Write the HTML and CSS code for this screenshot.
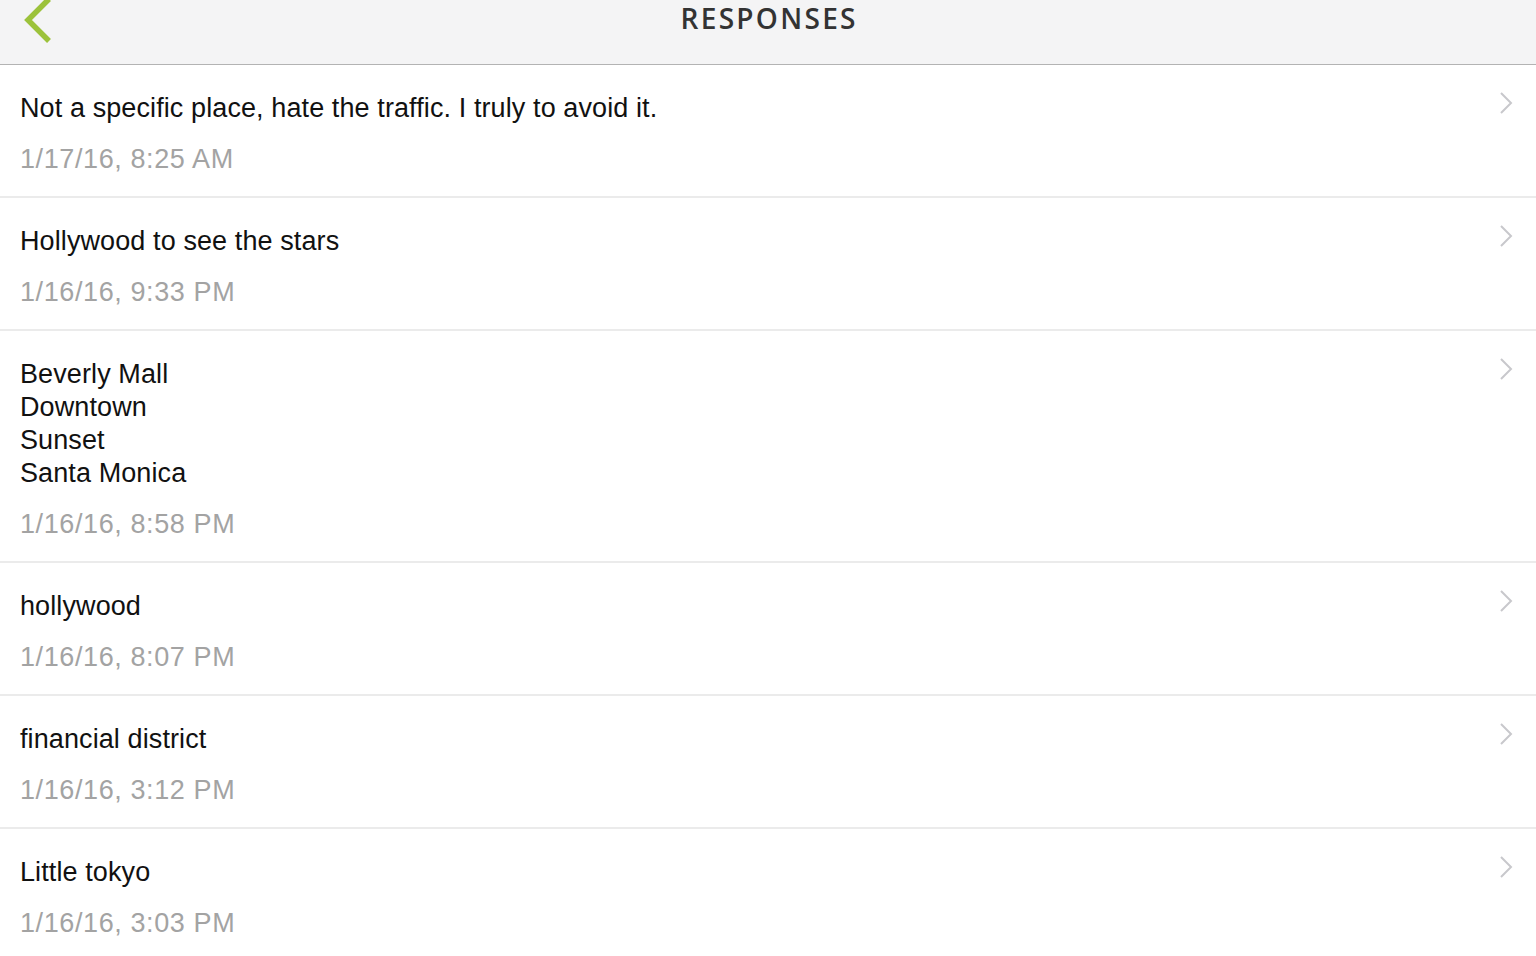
FILE: index.html
```html
<!DOCTYPE html>
<html lang="en">
<head>
<meta charset="utf-8">
<title>Responses</title>
<link rel="stylesheet" href="styles.css">
</head>
<body>
<header class="topbar">
  <div class="topbar-left">
    <svg class="back" width="32" height="44" viewBox="0 0 32 44" aria-hidden="true">
      <path d="M28 -1 L7 20 L28 41" fill="none" stroke="#9cc23b" stroke-width="5.5" stroke-linecap="butt" stroke-linejoin="miter"/>
    </svg>
  </div>
  <h1 class="title">RESPONSES</h1>
  <div class="topbar-right"></div>
</header>
<main class="list">
  <div class="row">
    <div class="row-body">
      <div class="answer">Not a specific place, hate the traffic. I truly to avoid it.</div>
      <div class="date">1/17/16, 8:25 AM</div>
    </div>
    <svg class="chev" width="14" height="24" viewBox="0 0 14 24" aria-hidden="true"><path d="M2 2 L12 12 L2 22" fill="none" stroke="#c8c8cc" stroke-width="2"/></svg>
  </div>
  <div class="row">
    <div class="row-body">
      <div class="answer">Hollywood to see the stars</div>
      <div class="date">1/16/16, 9:33 PM</div>
    </div>
    <svg class="chev" width="14" height="24" viewBox="0 0 14 24" aria-hidden="true"><path d="M2 2 L12 12 L2 22" fill="none" stroke="#c8c8cc" stroke-width="2"/></svg>
  </div>
  <div class="row">
    <div class="row-body">
      <div class="answer">Beverly Mall<br>Downtown<br>Sunset<br>Santa Monica</div>
      <div class="date">1/16/16, 8:58 PM</div>
    </div>
    <svg class="chev" width="14" height="24" viewBox="0 0 14 24" aria-hidden="true"><path d="M2 2 L12 12 L2 22" fill="none" stroke="#c8c8cc" stroke-width="2"/></svg>
  </div>
  <div class="row">
    <div class="row-body">
      <div class="answer">hollywood</div>
      <div class="date">1/16/16, 8:07 PM</div>
    </div>
    <svg class="chev" width="14" height="24" viewBox="0 0 14 24" aria-hidden="true"><path d="M2 2 L12 12 L2 22" fill="none" stroke="#c8c8cc" stroke-width="2"/></svg>
  </div>
  <div class="row">
    <div class="row-body">
      <div class="answer">financial district</div>
      <div class="date">1/16/16, 3:12 PM</div>
    </div>
    <svg class="chev" width="14" height="24" viewBox="0 0 14 24" aria-hidden="true"><path d="M2 2 L12 12 L2 22" fill="none" stroke="#c8c8cc" stroke-width="2"/></svg>
  </div>
  <div class="row">
    <div class="row-body">
      <div class="answer">Little tokyo</div>
      <div class="date">1/16/16, 3:03 PM</div>
    </div>
    <svg class="chev" width="14" height="24" viewBox="0 0 14 24" aria-hidden="true"><path d="M2 2 L12 12 L2 22" fill="none" stroke="#c8c8cc" stroke-width="2"/></svg>
  </div>
</main>
</body>
</html>
```

FILE: styles.css
```css
html, body {
  margin: 0;
  padding: 0;
  background: #ffffff;
  overflow: hidden;
}

body {
  font-family: "Liberation Sans", Arial, sans-serif;
  color: #111111;
}

.topbar {
  display: grid;
  grid-template-columns: 1fr auto 1fr;
  align-items: start;
  height: 64px;
  background: #f4f4f5;
  border-bottom: 1px solid #b3b3b3;
}

.topbar-left {
  display: flex;
  padding-left: 21px;
}

.back {
  display: block;
}

.title {
  margin: 0;
  padding-top: 1px;
  padding-left: 2.3px;
  font-family: "Open Sans", sans-serif;
  font-weight: 600;
  font-size: 28px;
  line-height: 34px;
  letter-spacing: 2.3px;
  color: #333333;
}

.list {
  display: flex;
  flex-direction: column;
}

.row {
  display: flex;
  justify-content: space-between;
  align-items: flex-start;
  padding: 27px 23px 20px 20px;
  border-bottom: 2px solid #ebebeb;
}

.row-body {
  display: flex;
  flex-direction: column;
  gap: 18px;
}

.answer {
  font-size: 27px;
  line-height: 33px;
  letter-spacing: 0.1px;
  color: #111111;
}

.date {
  font-size: 27px;
  line-height: 33px;
  letter-spacing: 0.6px;
  color: #a3a3a3;
}

.chev {
  display: block;
  margin-top: -1px;
}
```
